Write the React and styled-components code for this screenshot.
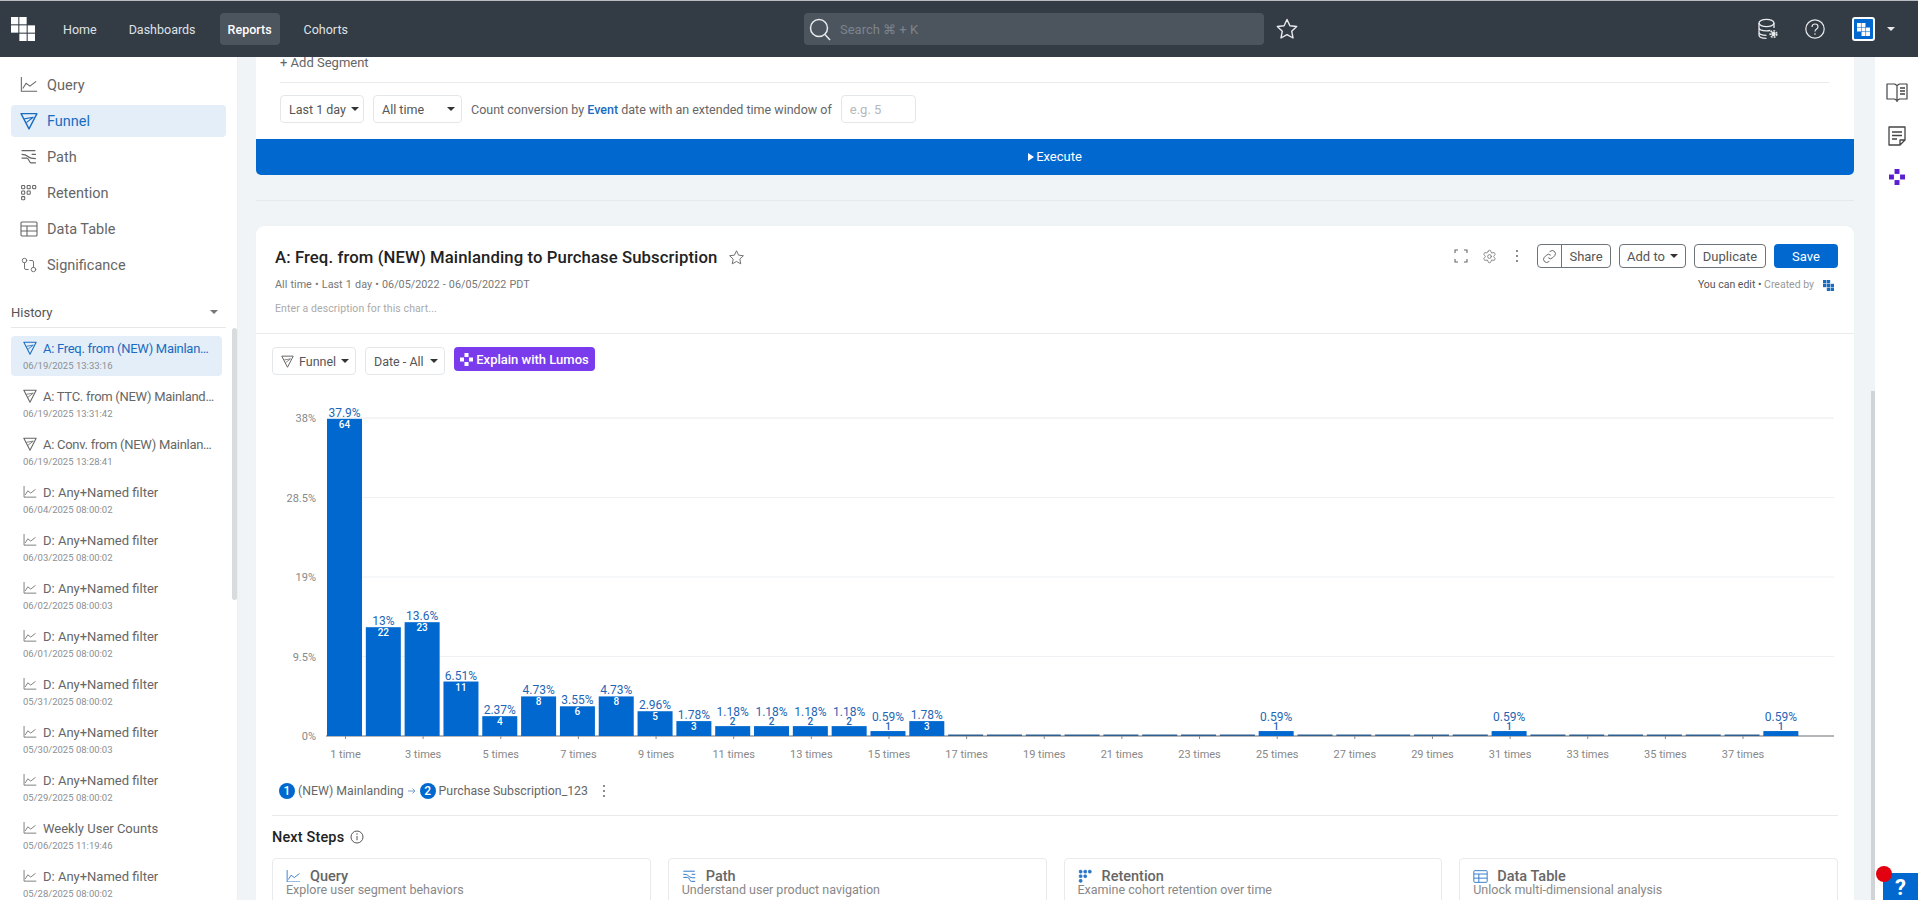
import React from "react";
import styled, { createGlobalStyle } from "styled-components";
import { Settings, GitCompare } from "lucide-react";

const Global = createGlobalStyle`
  html, body { margin: 0; padding: 0; height: 100%; overflow: hidden; }
  body { font-family: Roboto, "Liberation Sans", sans-serif; color: #555; background: #fff; }
  #root { height: 100%; }
  * { box-sizing: border-box; }
`;

const BLUE = "#0068cf";

const Page = styled.div`
  height: 900px; display: flex; flex-direction: column; overflow: hidden; position: relative;
`;
const TopBar = styled.header`
  height: 57px; flex: none; background: #333b45; border-top: 1px solid #b9bcc0;
  display: flex; align-items: center; padding: 0 0 0 11px; position: relative;
`;
const Nav = styled.nav`
  display: flex; align-items: center; margin-left: 20px; gap: 16px;
`;
const NavItem = styled.a`
  height: 32px; padding: 0 8px; display: flex; align-items: center; border-radius: 4px; font-size: 12.5px;
  color: ${p => (p.$active ? "#fff" : "#dfe2e5")};
  font-weight: ${p => (p.$active ? 500 : 400)};
  background: ${p => (p.$active ? "#4c545e" : "transparent")};
`;
const SearchBox = styled.div`
  width: 460px; height: 32px; border-radius: 4px; background: #4c545e; margin-left: 448px;
  display: flex; align-items: center; padding-left: 3px; gap: 7px; color: #7d848d; font-size: 13px;
`;
const StarWrap = styled.span`
  display: flex; margin-left: 11px;
`;
const TopRight = styled.div`
  margin-left: auto; display: flex; align-items: center; padding-right: 23px;
`;
const TopIcon = styled.span`
  display: flex; margin-right: ${p => p.$mr}px;
`;
const Avatar = styled.span`
  width: 23px; height: 24px; background: ${BLUE}; border: 2px solid #fff; border-radius: 3px;
  display: flex; align-items: center; justify-content: center;
`;
const Caret = styled.i`
  display: inline-block; width: 0; height: 0; flex: none;
  border-left: ${p => p.$s || 4}px solid transparent; border-right: ${p => p.$s || 4}px solid transparent;
  border-top: ${p => p.$s || 4}px solid ${p => p.$c || "#333"};
  margin-left: ${p => p.$ml || 5}px;
`;

const Body = styled.div`
  flex: 1; display: flex; min-height: 0;
`;
const Side = styled.aside`
  width: 238px; flex: none; background: #fff; padding: 12px 12px 0 11px; position: relative; overflow: hidden;
  border-right: 1px solid #eceff1;
`;
const SideItem = styled.div`
  height: 32px; margin: 0 0 4px; width: 215px; display: flex; align-items: center; border-radius: 4px;
  padding-left: 9px; gap: 9px; font-size: 14.5px;
  background: ${p => (p.$active ? "#e3eef8" : "transparent")};
  color: ${p => (p.$active ? "#1a6cc0" : "#666")};
`;
const HistoryHead = styled.div`
  margin-top: 20px; margin-bottom: 8px; width: 215px; height: 27px; display: flex; justify-content: space-between; align-items: center;
  padding: 2px 8px 6px 0; font-size: 13px; color: #555; border-bottom: 1px solid #e6e8ea;
`;
const HistoryRow = styled.div`
  width: 211px; height: 40px; margin-bottom: 8px; border-radius: 4px; padding: 2px 0 0 12px;
  background: ${p => (p.$active ? "#e3eef8" : "transparent")};
`;
const HistoryTitle = styled.div`
  display: flex; align-items: center; gap: 6px; height: 20px; font-size: 13px; white-space: nowrap;
  letter-spacing: ${p => (p.$tight ? "-.28px" : "0")};
  color: ${p => (p.$active ? "#1a6cc0" : "#666")};
`;
const HistoryDate = styled.div`
  font-size: 9.5px; color: #8b8f94; margin-top: 1px; line-height: 14px;
`;
const SideScroll = styled.div`
  position: absolute; right: 0; top: 271px; width: 5px; height: 272px; background: #d9dcde; border-radius: 3px;
`;

const Main = styled.main`
  flex: 1; background: #f0f4f6; padding: 0 21px 0 18px; overflow: hidden; min-width: 0; position: relative;
`;
const QueryPanel = styled.section`
  background: #fff; border-radius: 0 0 5px 5px; overflow: hidden;
`;
const PanelInner = styled.div`
  padding: 0 25px 0 24px;
`;
const AddSegment = styled.div`
  height: 26px; font-size: 13px; color: #666; line-height: 12px; border-bottom: 1px solid #e8eaec;
`;
const FilterRow = styled.div`
  display: flex; align-items: center; gap: 9px; height: 56px; padding-bottom: 4px; font-size: 12.5px; color: #666;
`;
const Select = styled.div`
  height: 28px; width: ${p => p.$w}px; border: 1px solid #e4e7ea; border-radius: 4px; background: #fff; white-space: nowrap;
  display: flex; align-items: center; justify-content: space-between; padding: 0 6px 0 8px; font-size: 12.5px; color: #555;
  flex: none;
`;
const ChipLabel = styled.span`
  margin-left: 5px; margin-right: auto;
`;
const Hint = styled.span`
  color: #666; white-space: nowrap;
  b { color: #1a6cc0; font-weight: 500; }
`;
const NumInput = styled.div`
  width: 75px; height: 28px; border: 1px solid #e4e7ea; border-radius: 4px; color: #b5b8bb; padding: 0 8px;
  display: flex; align-items: center; font-size: 13px;
`;
const Execute = styled.div`
  height: 36px; background: ${BLUE}; color: #fff; font-size: 13px; display: flex; align-items: center; justify-content: center; gap: 2px; padding-bottom: 1px;
`;
const Play = styled.i`
  width: 0; height: 0; border-top: 4px solid transparent; border-bottom: 4px solid transparent; border-left: 6px solid #fff;
`;
const Hair = styled.div`
  height: 1px; background: #e6e9eb; margin: 25px 0;
`;

const Card = styled.section`
  background: #fff; border-radius: 8px 8px 0 0; box-shadow: 0 0 1px #dfe3e6;
`;
const CardHead = styled.div`
  height: 108px; padding: 20px 16px 0 19px; border-bottom: 1px solid #e8eaec; display: flex; justify-content: space-between;
`;
const CardLeft = styled.div`
  display: flex; flex-direction: column;
`;
const TitleRow = styled.div`
  display: flex; align-items: center; height: 22px; gap: 11px;
`;
const Title = styled.h1`
  margin: 0; font-size: 16.7px; font-weight: 500; color: #222; letter-spacing: .1px;
`;
const Sub = styled.div`
  font-size: 10.8px; color: #777; margin-top: 10px; line-height: 14px; word-spacing: .5px;
`;
const Desc = styled.div`
  font-size: 10.5px; color: #aaa; margin-top: 10px; line-height: 14px; letter-spacing: .1px;
`;
const CardRight = styled.div`
  display: flex; flex-direction: column; align-items: flex-end; margin-top: -2px;
`;
const Actions = styled.div`
  display: flex; align-items: center; height: 24px;
`;
const Tool = styled.span`
  display: flex; margin-right: ${p => p.$mr}px; color: #777;
`;
const OutlineBtn = styled.div`
  height: 24px; width: ${p => p.$w}px; border: 1px solid #6e7378; border-radius: 4px; background: #fff; color: #555; font-size: 13px;
  display: flex; align-items: center; justify-content: center; margin-right: 8px;
`;
const ShareBtn = styled(OutlineBtn)`
  justify-content: flex-start; overflow: hidden;
`;
const ShareIcon = styled.span`
  width: 24px; height: 100%; border-right: 1px solid #6e7378; display: flex; align-items: center; justify-content: center;
`;
const ShareLabel = styled.span`
  flex: 1; text-align: center;
`;
const SaveBtn = styled.div`
  height: 24px; width: 64px; background: ${BLUE}; color: #fff; border-radius: 4px; font-size: 13px;
  display: flex; align-items: center; justify-content: center;
`;
const Edit = styled.div`
  display: flex; align-items: center; font-size: 10.5px; color: #555; margin-top: 10px; line-height: 14px; padding-right: 4px;
  span { color: #999; margin-right: 9px; }
`;

const Controls = styled.div`
  display: flex; gap: 9px; padding: 13px 16px 0 16px; align-items: flex-start; height: 67px;
`;
const Lumos = styled.div`
  height: 24px; width: 141px; background: #7a3bec; color: #fff; border-radius: 4px; font-size: 13px; font-weight: 500;
  display: flex; align-items: center; justify-content: center; gap: 3px;
`;
const ChartBox = styled.div`
  height: 378px;
  svg { display: block; }
`;
const Legend = styled.div`
  display: flex; align-items: center; padding-left: 23px; height: 24px; font-size: 12.3px; color: #666; gap: 3px;
`;
const Badge = styled.span`
  width: 16px; height: 16px; border-radius: 50%; background: ${BLUE}; color: #fff; font-size: 12px; font-weight: 500;
  display: flex; align-items: center; justify-content: center;
`;
const ArrowWrap = styled.span`
  display: flex; margin: 0 1px;
`;
const Kebab = styled.span`
  margin-left: 11px; display: flex;
`;
const Next = styled.div`
  margin: 12px 16px 0 16px; border-top: 1px solid #e8eaec; padding-top: 11px;
`;
const NextTitle = styled.div`
  display: flex; align-items: center; gap: 6px; font-size: 14.5px; font-weight: 500; color: #222; height: 20px; letter-spacing: .15px;
`;
const Cards = styled.div`
  display: grid; grid-template-columns: repeat(4, 1fr); gap: 17px; margin-top: 11px;
`;
const StepCard = styled.div`
  height: 70px; border: 1px solid #e8eaec; border-radius: 4px; padding: 8px 13px;
`;
const StepTitle = styled.div`
  display: flex; align-items: center; gap: 9px; font-size: 14.5px; font-weight: 500; color: #666; height: 18px;
`;
const StepDesc = styled.div`
  font-size: 12.5px; color: #888; line-height: 15px; margin-top: -3px;
`;

const Rail = styled.aside`
  width: 43px; flex: none; background: #fff; display: flex; flex-direction: column; align-items: center; padding-top: 24px; gap: 22px;
`;
const MainScroll = styled.div`
  position: absolute; right: 0; top: 334px; bottom: 0; width: 4px; background: #d0d4d6;
`;
const HelpBox = styled.div`
  position: absolute; right: 0; bottom: 0; width: 35px; height: 27px; background: ${BLUE}; color: #fff; font-size: 22px; font-weight: 700;
  display: flex; align-items: flex-end; justify-content: center; line-height: 25px;
`;
const RedDot = styled.div`
  position: absolute; left: 1876px; top: 866px; width: 16px; height: 16px; border-radius: 50%; background: #e3000f;
`;

/* ---------- icons ---------- */
const LogoMark = ({ size = 24, color = "#fff" }) => {
  const cells = [[0,0],[1,0],[0,1],[1,1],[2,1],[1,2],[2,2]];
  return (
    <svg width={size} height={size} viewBox="0 0 23 23" style={{ flex: "none" }}>
      {cells.map(([x, y]) => <rect key={x + "-" + y} x={x * 8} y={y * 8} width="7" height="7" fill={color} />)}
    </svg>
  );
};
const SearchIcon = () => (
  <svg width="26" height="26" viewBox="0 0 26 26" fill="none" stroke="#e8eaec" strokeWidth="1.5">
    <circle cx="12" cy="12" r="8.500" /><path d="M18 18.500l5 5.500" />
  </svg>
);
const Star = ({ size = 22, color = "#e8eaec", w = 1.4 }) => (
  <svg width={size} height={size} viewBox="0 0 24 24" fill="none" stroke={color} strokeWidth={w} strokeLinejoin="round" style={{ flex: "none" }}>
    <path d="M12 2.500l2.900 6.200 6.800.8-5 4.700 1.300 6.800-6-3.400-6 3.400 1.300-6.800-5-4.700 6.800-.8z" />
  </svg>
);
const DbIcon = () => (
  <svg width="22" height="22" viewBox="0 0 22 22" fill="none" stroke="#e8eaec" strokeWidth="1.300">
    <ellipse cx="9.500" cy="5" rx="7.500" ry="3.600" />
    <path d="M2 5v12c0 2 3.400 3.400 7.500 3.400M17 5v5M2 9.500c0 2 3.400 3.400 7.500 3.400 1.500 0 2.700-.2 3.800-.5M2 14c0 2 3.400 3.400 7.500 3.400" />
    <circle cx="16.500" cy="16" r="1.600" fill="#e8eaec" /><circle cx="16.500" cy="16" r="3.300" strokeDasharray="1.800 1.200" strokeWidth="1.600" />
  </svg>
);
const HelpIcon = () => (
  <svg width="20" height="20" viewBox="0 0 20 20" fill="none" stroke="#e8eaec" strokeWidth="1.200">
    <circle cx="10" cy="10" r="9.200" />
    <path d="M7 8c0-2 1.300-3 3-3s3 1.100 3 2.700c0 2.300-3 2.400-3 4.800" /><circle cx="10" cy="15" r=".8" fill="#e8eaec" stroke="none" />
  </svg>
);
const Line = ({ color = "#666", size = 18 }) => (
  <svg width={size} height={size * .85} viewBox="0 0 18 16" fill="none" stroke={color} strokeWidth="1.100" style={{ flex: "none" }}>
    <path d="M1 0v15h16.500" /><path d="M2.500 12l3.500-5.500 4 3 6.500-5" />
  </svg>
);
const Funnel = ({ color = "#666", size = 17 }) => (
  <svg width={size} height={size} viewBox="0 0 17 17" fill="none" stroke={color} strokeWidth="1.300" strokeLinejoin="round" style={{ flex: "none" }}>
    <path d="M1 1.500h15L8.500 16z" /><path d="M4 6.500L12.500 5 6 10" strokeWidth="1" />
  </svg>
);
const PathIcon = ({ color = "#666", size = 17 }) => (
  <svg width={size} height={size} viewBox="0 0 17 17" fill="none" stroke={color} strokeWidth="1.100" style={{ flex: "none" }}>
    <path d="M1.500 2.500h13M1.500 6c3 0 4 .2 6 2s3 2 7.500 2M11 6h4M1.500 9.500h5c2 0 2 4.500 4 4.500h4.500" />
  </svg>
);
const RetentionIcon = ({ color = "#666", fill = "none", size = 17 }) => {
  const d = [[0,0],[1,0],[2,0],[0,1],[1,1],[0,2]];
  return (
    <svg width={size} height={size} viewBox="0 0 17 17" fill={fill} stroke={color} strokeWidth="1" style={{ flex: "none" }}>
      {d.map(([x, y]) => <rect key={x + "" + y} x={1.500 + x * 5.200} y={1.500 + y * 5.200} width="3" height="3" rx=".8" />)}
    </svg>
  );
};
const TableIcon = ({ color = "#666", size = 18 }) => (
  <svg width={size} height={size} viewBox="0 0 18 18" fill="none" stroke={color} strokeWidth="1.100" style={{ flex: "none" }}>
    <rect x="1" y="2" width="16" height="14" rx="1" /><path d="M1 6h16M1 11h16M7 6v10" />
  </svg>
);
const LumosIcon = ({ color = "#fff", size = 13 }) => (
  <svg width={size} height={size} viewBox="0 0 13 13" fill={color} style={{ flex: "none" }}>
    <rect x="4.500" y="0" width="4" height="4" /><rect x="0" y="4.500" width="4" height="4" /><rect x="9" y="4.500" width="4" height="4" /><rect x="4.500" y="9" width="4" height="4" />
  </svg>
);
const BookIcon = () => (
  <svg width="22" height="22" viewBox="0 0 22 22" fill="none" stroke="#444" strokeWidth="1.200" strokeLinejoin="round">
    <path d="M1 3h7.500L11 4.500 13.500 3H21v15h-7.500L11 19.500 8.500 18H1zM11 4.500V21" />
    <path d="M14 7h5M14 10h5M14 13h5" strokeWidth="1.500" />
  </svg>
);
const NoteIcon = () => (
  <svg width="20" height="22" viewBox="0 0 20 22" fill="none" stroke="#444" strokeWidth="1.300" strokeLinejoin="round">
    <path d="M2 2h16v13l-5 5H2zM13 20v-5h5" /><path d="M5 7h10M5 10.500h10M5 14h5" />
  </svg>
);
const Fullscreen = () => (
  <svg width="14" height="14" viewBox="0 0 14 14" fill="none" stroke="#666" strokeWidth="1.100">
    <path d="M1 4V1h3M10 1h3v3M13 10v3h-3M4 13H1v-3" />
  </svg>
);
const Dots = ({ h = 14 }) => (
  <svg width="4" height={h} viewBox="0 0 4 14" fill="#666"><circle cx="2" cy="2" r="1" /><circle cx="2" cy="7" r="1" /><circle cx="2" cy="12" r="1" /></svg>
);
const LinkIcon = () => (
  <svg width="15" height="15" viewBox="0 0 24 24" fill="none" stroke="#666" strokeWidth="1.600">
    <path d="M10 14a5 5 0 0 0 7 0l3.500-3.500a5 5 0 0 0-7-7L12 5" /><path d="M14 10a5 5 0 0 0-7 0l-3.500 3.500a5 5 0 0 0 7 7L12 19" />
  </svg>
);
const Info = () => (
  <svg width="14" height="14" viewBox="0 0 14 14" fill="none" stroke="#555" strokeWidth="1">
    <circle cx="7" cy="7" r="6" /><path d="M7 6v4.200" /><circle cx="7" cy="4" r=".7" fill="#555" stroke="none" />
  </svg>
);
const StepArrow = () => (
  <svg width="8" height="8" viewBox="0 0 8 8" fill="none" stroke="#7a9cc4" strokeWidth="1" style={{ flex: "none" }}>
    <path d="M0 4h7M4.500 1.500L7 4 4.500 6.500" />
  </svg>
);

/* ---------- chart ---------- */
const pct = { 1: ["37.9%", 64], 2: ["13%", 22], 3: ["13.6%", 23], 4: ["6.51%", 11], 5: ["2.37%", 4], 6: ["4.73%", 8], 7: ["3.55%", 6], 8: ["4.73%", 8], 9: ["2.96%", 5], 10: ["1.78%", 3], 11: ["1.18%", 2], 12: ["1.18%", 2], 13: ["1.18%", 2], 14: ["1.18%", 2], 15: ["0.59%", 1], 16: ["1.78%", 3], 25: ["0.59%", 1], 31: ["0.59%", 1], 38: ["0.59%", 1] };
const STEP = 38.82, X0 = 327 - 256, BASE = 736 - 401, BW = 35, PER = 318 / 38;
const Chart = () => {
  const grid = [["38%", 38], ["28.5%", 28.5], ["19%", 19], ["9.5%", 9.5], ["0%", 0]];
  const slots = Array.from({ length: 38 }, (_, i) => i + 1);
  return (
    <svg width="1598" height="378" viewBox="0 0 1598 378" fontFamily="Roboto, sans-serif">
      {grid.map(([l, v]) => (
        <g key={l}>
          {v > 0 && <line x1={X0} x2="1578" y1={BASE - v * PER} y2={BASE - v * PER} stroke="#eef0f3" strokeWidth={v === 38 ? 1.5 : 1} />}
          <text x="60" y={BASE - v * PER + 4} textAnchor="end" fontSize="11" fill="#888">{l}</text>
        </g>
      ))}
      <line x1={X0 - 1} x2="1578" y1={BASE} y2={BASE} stroke="#9b9ea2" strokeWidth="1.500" />
      {slots.map(n => {
        const x = X0 + (n - 1) * STEP;
        const cx = x + 17.500;
        const tx = x + 18.500;
        const tick = n % 2 === 1;
        const d = pct[n];
        const h = d ? parseFloat(d[0]) * PER : 1.500;
        const top = BASE - h;
        const inside = d && h >= 14;
        return (
          <g key={n}>
            <rect x={x} y={top} width={BW} height={h} fill={d ? BLUE : "#2f5f8f"} />
            {tick && <line x1={tx} x2={tx} y1={BASE} y2={BASE + 3} stroke="#888" />}
            {tick && <text x={tx} y={BASE + 22} textAnchor="middle" fontSize="11" fill="#888">{n === 1 ? "1 time" : n + " times"}</text>}
            {d && (
              <>
                <text x={cx} y={inside ? top - 2 : top - 10} textAnchor="middle" fontSize="12" fill="#1f66b5">{d[0]}</text>
                <text x={cx} y={inside ? top + 9 : top - 1} textAnchor="middle" fontSize="10" fontWeight="500" fill={inside ? "#fff" : "#1f66b5"}>{d[1]}</text>
              </>
            )}
          </g>
        );
      })}
    </svg>
  );
};

const history = [
  ["f", "A: Freq. from (NEW) Mainlan…", "06/19/2025 13:33:16", true],
  ["f", "A: TTC. from (NEW) Mainland…", "06/19/2025 13:31:42"],
  ["f", "A: Conv. from (NEW) Mainlan…", "06/19/2025 13:28:41"],
  ["l", "D: Any+Named filter", "06/04/2025 08:00:02"],
  ["l", "D: Any+Named filter", "06/03/2025 08:00:02"],
  ["l", "D: Any+Named filter", "06/02/2025 08:00:03"],
  ["l", "D: Any+Named filter", "06/01/2025 08:00:02"],
  ["l", "D: Any+Named filter", "05/31/2025 08:00:02"],
  ["l", "D: Any+Named filter", "05/30/2025 08:00:03"],
  ["l", "D: Any+Named filter", "05/29/2025 08:00:02"],
  ["l", "Weekly User Counts", "05/06/2025 11:19:46"],
  ["l", "D: Any+Named filter", "05/28/2025 08:00:02"],
];

export default function App() {
  return (
    <Page>
      <Global />
      <TopBar>
        <LogoMark size={24} />
        <Nav>
          <NavItem>Home</NavItem>
          <NavItem>Dashboards</NavItem>
          <NavItem $active>Reports</NavItem>
          <NavItem>Cohorts</NavItem>
        </Nav>
        <SearchBox><SearchIcon />Search ⌘ + K</SearchBox>
        <StarWrap><Star size={24} /></StarWrap>
        <TopRight>
          <TopIcon $mr={26}><DbIcon /></TopIcon>
          <TopIcon $mr={27}><HelpIcon /></TopIcon>
          <Avatar><LogoMark size={13} /></Avatar>
          <Caret $s={4} $c="#e8eaec" $ml={12} />
        </TopRight>
      </TopBar>
      <Body>
        <Side>
          <SideItem><Line /> Query</SideItem>
          <SideItem $active><Funnel color="#1a6cc0" size={18} /> Funnel</SideItem>
          <SideItem><PathIcon size={18} /> Path</SideItem>
          <SideItem><RetentionIcon size={18} /> Retention</SideItem>
          <SideItem><TableIcon /> Data Table</SideItem>
          <SideItem><GitCompare size={18} strokeWidth={1.2} /> Significance</SideItem>
          <HistoryHead>History<Caret $s={4.500} $c="#777" /></HistoryHead>
          {history.map(([k, t, d, a], i) => (
            <HistoryRow key={i} $active={a}>
              <HistoryTitle $active={a} $tight={k === "f"}>
                {k === "f" ? <Funnel size={14} color={a ? "#1a6cc0" : "#666"} /> : <Line size={14} />}
                {t}
              </HistoryTitle>
              <HistoryDate>{d}</HistoryDate>
            </HistoryRow>
          ))}
          <SideScroll />
        </Side>
        <Main>
          <QueryPanel>
            <PanelInner>
              <AddSegment>+ Add Segment</AddSegment>
              <FilterRow>
                <Select $w={84}>Last 1 day<Caret /></Select>
                <Select $w={89}>All time<Caret /></Select>
                <Hint>Count conversion by <b>Event</b> date with an extended time window of</Hint>
                <NumInput>e.g. 5</NumInput>
              </FilterRow>
            </PanelInner>
            <Execute><Play />Execute</Execute>
          </QueryPanel>
          <Hair />
          <Card>
            <CardHead>
              <CardLeft>
                <TitleRow>
                  <Title>A: Freq. from (NEW) Mainlanding to Purchase Subscription</Title>
                  <Star size={17} color="#666" w={1.300} />
                </TitleRow>
                <Sub>All time • Last 1 day • 06/05/2022 - 06/05/2022 PDT</Sub>
                <Desc>Enter a description for this chart...</Desc>
              </CardLeft>
              <CardRight>
                <Actions>
                  <Tool $mr={14}><Fullscreen /></Tool>
                  <Tool $mr={18}><Settings size={15} strokeWidth={1.4} /></Tool>
                  <Tool $mr={18}><Dots /></Tool>
                  <ShareBtn $w={74}><ShareIcon><LinkIcon /></ShareIcon><ShareLabel>Share</ShareLabel></ShareBtn>
                  <OutlineBtn $w={67}>Add to<Caret /></OutlineBtn>
                  <OutlineBtn $w={72}>Duplicate</OutlineBtn>
                  <SaveBtn>Save</SaveBtn>
                </Actions>
                <Edit>You can edit •&nbsp;<span>Created by</span><LogoMark size={11} color="#1a6cc0" /></Edit>
              </CardRight>
            </CardHead>
            <Controls>
              <Select $w={84}><Funnel size={13} /><ChipLabel>Funnel</ChipLabel><Caret /></Select>
              <Select $w={80}>Date - All<Caret /></Select>
              <Lumos><LumosIcon />Explain with Lumos</Lumos>
            </Controls>
            <ChartBox><Chart /></ChartBox>
            <Legend>
              <Badge>1</Badge><span>(NEW) Mainlanding</span><ArrowWrap><StepArrow /></ArrowWrap><Badge>2</Badge><span>Purchase Subscription_123</span>
              <Kebab><Dots /></Kebab>
            </Legend>
            <Next>
              <NextTitle>Next Steps <Info /></NextTitle>
              <Cards>
                <StepCard><StepTitle><Line color="#2b75c7" size={15} />Query</StepTitle><StepDesc>Explore user segment behaviors</StepDesc></StepCard>
                <StepCard><StepTitle><PathIcon color="#2b75c7" size={15} />Path</StepTitle><StepDesc>Understand user product navigation</StepDesc></StepCard>
                <StepCard><StepTitle><RetentionIcon color="#2b75c7" fill="#2b75c7" size={15} />Retention</StepTitle><StepDesc>Examine cohort retention over time</StepDesc></StepCard>
                <StepCard><StepTitle><TableIcon color="#2b75c7" size={15} />Data Table</StepTitle><StepDesc>Unlock multi-dimensional analysis</StepDesc></StepCard>
              </Cards>
            </Next>
          </Card>
          <MainScroll />
        </Main>
        <Rail>
          <BookIcon />
          <NoteIcon />
          <LumosIcon color="#5a1fd1" size={16} />
        </Rail>
      </Body>
      <HelpBox>?</HelpBox>
      <RedDot />
    </Page>
  );
}
